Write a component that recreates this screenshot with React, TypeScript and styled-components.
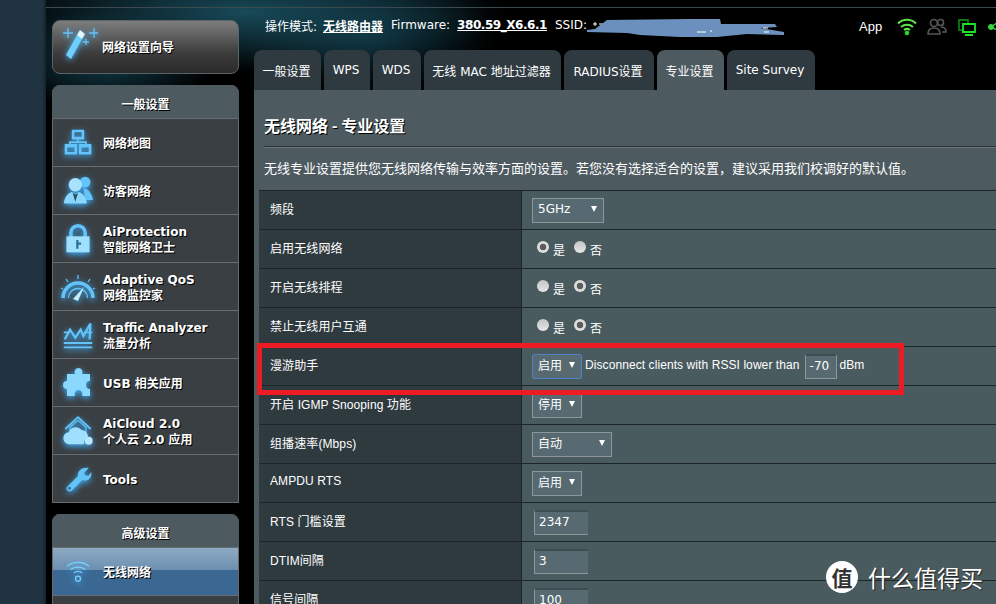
import React from "react";
import styled, { createGlobalStyle } from "styled-components";

const Global = createGlobalStyle`
  html, body { margin: 0; padding: 0; background: #000; }
  body { width: 996px; height: 604px; overflow: hidden; font-family: "DejaVu Sans", "Noto Sans CJK SC", sans-serif; }
  * { box-sizing: border-box; }
`;

const CJK = `"Noto Sans CJK SC"`;

const Page = styled.div`
  position: relative;
  display: flex;
  width: 996px;
  height: 604px;
  overflow: hidden;
`;
const Rail = styled.div`
  width: 46px;
  flex: none;
  background: linear-gradient(90deg, #1f3341 0, #1f3341 42px, #16232c 46px);
`;
const Stage = styled.div`
  flex: 1;
  min-width: 0;
  background-color: #000;
  background-image:
    radial-gradient(ellipse 260px 60px at 200px 12px, #184a59 0, #123a4700 100%),
    radial-gradient(ellipse 110px 50px at 60px 60px, #123d4b 0, #123d4b00 100%),
    radial-gradient(ellipse 130px 60px at 320px 35px, #0d2e3a 0, #0d2e3a00 100%);
  background-repeat: no-repeat;
`;
const TopStrip = styled.div`
  height: 8px;
  border-bottom: 1px solid #3c4a50;
`;
const Columns = styled.div`
  display: flex;
  align-items: flex-start;
`;
const Sidebar = styled.aside`
  width: 208px;
  flex: none;
  padding: 12px 0 0 6px;
  display: flex;
  flex-direction: column;
  gap: 11px;
`;
const Wizard = styled.div`
  width: 187px;
  height: 54px;
  border: 1px solid #5a6468;
  border-radius: 8px;
  background: linear-gradient(180deg, #7d7d7d 0, #3c3c3c 62%, #2a2a2a 100%);
  display: flex;
  align-items: center;
  padding-left: 9px;
`;
const WandBox = styled.div`
  margin-bottom: 9px;
  flex: none;
  svg { display: block; filter: drop-shadow(0 1px 3px #49b8ff); }
`;
const Section = styled.section`
  width: 187px;
  border-radius: 8px 8px 0 0;
  overflow: hidden;
`;
const SectionHead = styled.div`
  height: 33px;
  background: #4d5a5f;
  border: 1px solid #4d5a5f;
  border-bottom: none;
  padding-top: 2px;
  color: #fff;
  font: bold 12px ${CJK}, sans-serif;
  text-shadow: 1px 1px 0 #000;
  display: flex;
  align-items: center;
  justify-content: center;
`;
const NavRow = styled.div<{ $active?: boolean; $h?: number }>`
  height: ${(p) => p.$h ?? 48}px;
  display: flex;
  align-items: center;
  border: 1px solid #666c70;
  border-bottom: none;
  background: ${(p) =>
    p.$active
      ? "linear-gradient(180deg, #8eabc4 0, #6d8fb0 46%, #3a6893 46%, #3a6893 100%)"
      : "#3a3f43"};
  &:last-child { border-bottom: 1px solid #666c70; }
`;
const IconSlot = styled.div`
  width: 50px;
  height: 36px;
  flex: none;
  display: flex;
  justify-content: center;
  align-items: center;
  svg { filter: drop-shadow(0 2px 3px #3fb0ff); display: block; }
`;
const NavLabel = styled.div`
  padding-top: 2px;
  color: #fff;
  font: bold 12px/16px "DejaVu Sans", ${CJK}, sans-serif;
  text-shadow: 1px 1px 0 #000;
  white-space: nowrap;
`;
const WizardLabel = styled(NavLabel)`
  margin-left: 4px;
`;
const Main = styled.main`
  flex: 1;
  min-width: 0;
`;
const StatusBar = styled.div`
  height: 42px;
  display: flex;
  align-items: center;
  padding: 0 0 8px 11px;
  font: 12px "DejaVu Sans", ${CJK}, sans-serif;
  color: #fff;
  white-space: nowrap;
`;
const Strong = styled.span<{ $tight?: boolean }>`
  font-weight: bold;
  text-decoration: underline;
  margin: 0 8px 0 ${(p) => (p.$tight ? 7 : 6)}px;
  letter-spacing: ${(p) => (p.$tight ? -0.45 : 0)}px;
`;
const Ssid = styled.span`
  position: relative;
  display: inline-block;
  width: 200px;
  height: 16px;
`;
const ScribbleSvg = styled.svg`
  position: absolute;
  left: 0;
  top: 0;
  overflow: visible;
`;
const StatusRight = styled.div`
  margin-left: auto;
  display: flex;
  align-items: center;
  width: 137px;
  font: 13px "Liberation Sans", sans-serif;
  overflow: hidden;
  padding-top: 3px;
  svg { display: block; flex: none; }
`;
const AppText = styled.span`
  width: 38px;
  flex: none;
`;
const IconGap = styled.span<{ $w: number }>`
  width: ${(p) => p.$w}px;
  flex: none;
`;
const Tabs = styled.div`
  display: flex;
  gap: 3px;
  height: 40px;
`;
const Tab = styled.div<{ $w: number; $on?: boolean }>`
  width: ${(p) => p.$w}px;
  border-radius: 8px 8px 0 0;
  padding-right: 2px;
  background: ${(p) => (p.$on ? "#4d5a5f" : "#2e3a3f")};
  color: #fff;
  font: 12px "DejaVu Sans", ${CJK}, sans-serif;
  display: flex;
  align-items: center;
  justify-content: center;
  white-space: nowrap;
`;
const Panel = styled.div`
  background: #4d5a5f;
  padding-left: 5px;
  height: 514px;
`;
const Title = styled.h1`
  margin: 0 0 0 5px;
  height: 57px;
  padding-top: 23px;
  border-bottom: 1px solid #2b3437;
  box-shadow: 0 1px 0 #6a7579;
  color: #fff;
  font: bold 16px/24px ${CJK}, sans-serif;
  text-shadow: 1px 1px 0 #000;
`;
const Description = styled.p`
  margin: 0 0 0 5px;
  height: 43px;
  padding-top: 11px;
  color: #fff;
  font: 13px/20px ${CJK}, sans-serif;
  white-space: nowrap;
`;
const Table = styled.div`
  border-top: 1px solid #1e2528;
`;
const Row = styled.div`
  display: grid;
  grid-template-columns: 262px 1fr;
  height: 39px;
  border-bottom: 1px solid #1e2528;
`;
const Label = styled.div`
  background: #2f3a3f;
  color: #fff;
  font: 12px "Liberation Sans", ${CJK}, sans-serif;
  display: flex;
  align-items: center;
  padding: 0 0 4px 11px;
  letter-spacing: 0.1px;
`;
const Value = styled.div`
  background: #4a5b60;
  border-left: 1px solid #1e2528;
  display: flex;
  align-items: center;
  padding-left: 10px;
  color: #fff;
  font: 12px "Liberation Sans", ${CJK}, sans-serif;
  white-space: nowrap;
`;
const Select = styled.div<{ $w: number; $focus?: boolean }>`
  width: ${(p) => p.$w}px;
  height: 25px;
  flex: none;
  background: #576a72;
  border: 1px solid ${(p) => (p.$focus ? "#4f82c4" : "#8c979a")};
  border-radius: ${(p) => (p.$focus ? 2 : 0)}px;
  display: flex;
  align-items: center;
  justify-content: space-between;
  padding: 0 6px 3px 5px;
  color: #fff;
  font: 12px "DejaVu Sans", ${CJK}, sans-serif;
`;
const Arrow = styled.span`
  width: 0;
  height: 0;
  border-left: 3.5px solid transparent;
  border-right: 3.5px solid transparent;
  border-top: 6px solid #fff;
`;
const Radio = styled.span<{ $on?: boolean }>`
  width: 12px;
  height: 12px;
  border-radius: 50%;
  margin: 0 4px 4px 5px;
  flex: none;
  background: ${(p) =>
    p.$on
      ? "radial-gradient(circle, #5c5c5c 0, #5c5c5c 3px, #dcdcdc 3.6px)"
      : "linear-gradient(180deg, #c4c4c4, #e6e6e6)"};
`;
const RadioText = styled.span`
  margin-right: 4px;
`;
const Hint = styled.span`
  margin: 0 0 3px 3px;
  font-size: 12px;
  letter-spacing: 0.08px;
`;
const NumberBox = styled.div<{ $w: number; $open?: boolean }>`
  width: ${(p) => p.$w}px;
  height: 25px;
  flex: none;
  background: #576a72;
  border: 1px solid #8c979a;
  border-top: 2px solid #3f4c50;
  ${(p) => (p.$open ? "border-right: none; margin-left: 2px;" : "")}
  color: #fff;
  font: 12px "DejaVu Sans", sans-serif;
  display: flex;
  align-items: center;
  padding: 0 0 1px 4px;
`;
const NumberGap = styled.div`
  margin: 0 3px 0 5px;
`;
const Unit = styled.span`
  font-size: 12px;
  margin-bottom: 2px;
`;
const RedBox = styled.div`
  position: absolute;
  left: 257px;
  top: 343px;
  width: 647px;
  height: 52px;
  border: 5px solid #ed1c24;
  pointer-events: none;
`;
const Watermark = styled.div`
  position: absolute;
  left: 826px;
  top: 561px;
  display: flex;
  align-items: center;
  gap: 10px;
`;
const Badge = styled.div`
  width: 32px;
  height: 32px;
  border-radius: 50%;
  background: #fff;
  color: #333;
  font: bold 21px/32px ${CJK}, sans-serif;
  text-align: center;
`;
const MarkText = styled.div`
  color: #fff;
  font: 23px/32px ${CJK}, sans-serif;
  text-shadow: 1px 1px 1px #222;
`;

const B = "#62c4f8";
const Ico: React.FC<{ s?: number; children: React.ReactNode }> = ({ s = 36, children }) => (
  <svg width={s} height={s} viewBox="0 0 36 36" fill={B}>
    {children}
  </svg>
);

const WandIcon = () => (
  <svg width="36" height="36" viewBox="0 0 36 36" fill="none">
    <path d="M4 30l5 4 11-20-5-4z" fill="#6fd0fb" />
    <path d="M15 10l5 4 3-5-5-4z" fill="#e4f6ff" />
    <path d="M6 3v10M1 8h10M32 3v10M27 8h9M24 14v6M21 17h6" stroke={B} strokeWidth="1.300" />
  </svg>
);
const NetIcon = () => (
  <Ico s={32}>
    <path fillRule="evenodd" d="M11 3h14v11h-14zM14 6v5h8v-5zM3 19h14v12H3zM6 23v5h8v-5zM19 19h14v12H19zM22 23v5h8v-5z" />
    <path d="M17 14h2v2h9v3h-2v-1H10v1H8v-3h9z" />
  </Ico>
);
const GuestIcon = () => (
  <Ico s={32}>
    <circle cx="26" cy="8" r="6" />
    <path d="M24 15c5 0 9 5 11 13H26z" />
    <circle cx="15" cy="11" r="7.500" fill="#a8e2ff" />
    <path d="M2 32c1-8 5-12 9-13l4 2 4-2c4 1 8 5 9 13z" fill="#8bd6fd" />
    <path d="M12 20l3 10 3-10-3 2z" fill="#2b4d63" />
  </Ico>
);
const LockIcon = () => (
  <Ico s={32}>
    <path d="M8 17v-6a10 10 0 0 1 20 0v6h-4v-6a6 6 0 0 0-12 0v6z" />
    <path d="M5 15h26v18H5z" fill="#9fe0ff" />
    <path d="M16 19h2.500v3h3v2.500h-3V29H16z" fill="#2e6f96" />
  </Ico>
);
const GaugeIcon = () => (
  <Ico>
    <g fill="none" stroke={B}>
      <path d="M3 29a15 15 0 0 1 30 0" strokeWidth="3.500" />
      <path d="M8.500 29a9.500 9.500 0 0 1 19 0" strokeWidth="1.300" />
      <path d="M18 10V6M8 13L6 10M28 13l2-3M3 20l-2-1M33 20l2-1" strokeWidth="1.300" />
    </g>
    <path d="M13 30l11-12-6 14z" fill="#c6eeff" />
  </Ico>
);
const TrafficIcon = () => (
  <Ico s={32}>
    <path d="M2 26h32v2H2zM2 31h32v2H2zM2 14h7v2H2zM27 14h7v2h-7z" />
    <path d="M3 23l6-11 6 9 6-9 3 7 8-14-1 18" fill="none" stroke={B} strokeWidth="2.500" />
  </Ico>
);
const PuzzleIcon = () => (
  <Ico>
    <path d="M7 9h8a4 4 0 1 1 7 0h8v7a4 4 0 1 0 0 8v7h-8a4 4 0 1 0-7 0H7v-7a4 4 0 1 1 0-8z" fill="#8bd8ff" />
  </Ico>
);
const CloudIcon = () => (
  <Ico s={32}>
    <path d="M18 1L3 15l1.500 1.500L18 4l13.500 12.500L33 15z" />
    <path d="M9 14l9-8 9 8v6H9z" fill="none" stroke={B} strokeWidth="1.500" />
    <path d="M9 33a7 7 0 0 1-1-14 8 8 0 0 1 14-2 7 7 0 0 1 7 8 6 6 0 0 0-4 8z" fill="#9fe0ff" />
    <circle cx="30" cy="29" r="4.500" fill="#b8e8ff" />
  </Ico>
);
const WrenchIcon = () => (
  <Ico s={28}>
    <path fillRule="evenodd" d="M32 4l-6 6 1 3 4 1 4-5c1 6-2 11-8 11-1 0-2 0-3-1L10 33c-2 2-7 1-7-3 0-1 1-2 2-3l13-13c-1-6 5-12 14-10zM7 28a2 2 0 1 0 .1 0z" />
  </Ico>
);
const WifiIcon = () => (
  <Ico s={30}>
    <g fill="none" stroke="#7fd0fa" strokeWidth="1.500">
      <path d="M5 11c7-6 19-6 26 0M9 15c5-4 13-4 18 0M13 19c3-2 7-2 10 0" />
      <circle cx="18" cy="26" r="3" />
    </g>
  </Ico>
);

const GreenWifi = () => (
  <svg width="20" height="18" viewBox="0 0 20 18" fill="none" stroke="#62e24a" strokeWidth="2">
    <path d="M1 5.500c5-5 13-5 18 0M4 9c3.500-3 8.500-3 12 0M7 12c2-1.500 4-1.500 6 0" />
    <circle cx="10" cy="15" r="2.300" fill="#1fdc2a" stroke="none" />
  </svg>
);
const People = () => (
  <svg width="20" height="17" viewBox="0 0 20 17" fill="none" stroke="#555" strokeWidth="1.700">
    <circle cx="13.500" cy="4.500" r="3" />
    <circle cx="7" cy="5" r="3.500" />
    <path d="M1 16c0-4 2-6 6-6s6 2 6 6zM14 9c3 0 5 2 5 5h-4" />
  </svg>
);
const Monitors = () => (
  <svg width="18" height="18" viewBox="0 0 18 18" fill="none" strokeWidth="1.800">
    <path d="M4 12H1V2h9v3" stroke="#0a7a0f" />
    <path d="M5 6h12v8H5zM7 17h8" stroke="#1be526" />
  </svg>
);
const Share = () => (
  <svg width="9" height="12" viewBox="0 0 9 12" fill="#39d63f" stroke="#39d63f">
    <circle cx="3" cy="6" r="2.500" />
    <path d="M3 6L9 2M3 6l6 3" fill="none" strokeWidth="1.500" />
  </svg>
);
const Scribble = () => (
  <ScribbleSvg width="200" height="20" viewBox="0 0 200 20">
    <path d="M6 14h26" stroke="#fff" strokeWidth="1" />
    <path d="M6 7h4M8 5v4M12 7h6" stroke="#fff" strokeWidth="1" />
    <path
      d="M0 13L8 12 20 3 103 2 133 2 134 7 188 7 190 10 173 11 197 15 197 18 160 17 130 20 93 20 53 18 40 16 0 15z"
      fill="#6c90bd"
    />
    <path d="M110 15h9M123 14h2M176 11h5M177 15h5" stroke="#fff" strokeWidth="1.200" />
  </ScribbleSvg>
);

const TABS: [string, number, boolean?][] = [
  ["一般设置", 67],
  ["WPS", 46],
  ["WDS", 48],
  ["无线 MAC 地址过滤器", 137],
  ["RADIUS设置", 90],
  ["专业设置", 67, true],
  ["Site Survey", 88],
];

const YesNo: React.FC<{ yes: boolean }> = ({ yes }) => (
  <>
    <Radio $on={yes} />
    <RadioText>是</RadioText>
    <Radio $on={!yes} />
    <RadioText>否</RadioText>
  </>
);

export default function App() {
  return (
    <Page>
      <Global />
      <Rail />
      <Stage>
        <TopStrip />
        <Columns>
          <Sidebar>
            <Wizard>
              <WandBox><WandIcon /></WandBox>
              <WizardLabel>网络设置向导</WizardLabel>
            </Wizard>
            <Section>
              <SectionHead>一般设置</SectionHead>
              <NavRow><IconSlot><NetIcon /></IconSlot><NavLabel>网络地图</NavLabel></NavRow>
              <NavRow><IconSlot><GuestIcon /></IconSlot><NavLabel>访客网络</NavLabel></NavRow>
              <NavRow><IconSlot><LockIcon /></IconSlot><NavLabel>AiProtection<br />智能网络卫士</NavLabel></NavRow>
              <NavRow><IconSlot><GaugeIcon /></IconSlot><NavLabel>Adaptive QoS<br />网络监控家</NavLabel></NavRow>
              <NavRow><IconSlot><TrafficIcon /></IconSlot><NavLabel>Traffic Analyzer<br />流量分析</NavLabel></NavRow>
              <NavRow><IconSlot><PuzzleIcon /></IconSlot><NavLabel>USB 相关应用</NavLabel></NavRow>
              <NavRow><IconSlot><CloudIcon /></IconSlot><NavLabel>AiCloud 2.0<br />个人云 2.0 应用</NavLabel></NavRow>
              <NavRow $h={49}><IconSlot><WrenchIcon /></IconSlot><NavLabel>Tools</NavLabel></NavRow>
            </Section>
            <Section>
              <SectionHead>高级设置</SectionHead>
              <NavRow $active><IconSlot><WifiIcon /></IconSlot><NavLabel>无线网络</NavLabel></NavRow>
              <NavRow />
            </Section>
          </Sidebar>
          <Main>
            <StatusBar>
              操作模式:<Strong>无线路由器</Strong>Firmware:<Strong $tight>380.59_X6.6.1</Strong>SSID:
              <Ssid><Scribble /></Ssid>
              <StatusRight>
                <AppText>App</AppText>
                <GreenWifi />
                <IconGap $w={10} />
                <People />
                <IconGap $w={11} />
                <Monitors />
                <IconGap $w={12} />
                <Share />
              </StatusRight>
            </StatusBar>
            <Tabs>
              {TABS.map(([t, w, on]) => (
                <Tab key={t} $w={w} $on={on}>{t}</Tab>
              ))}
            </Tabs>
            <Panel>
              <Title>无线网络 - 专业设置</Title>
              <Description>无线专业设置提供您无线网络传输与效率方面的设置。若您没有选择适合的设置，建议采用我们校调好的默认值。</Description>
              <Table>
                <Row><Label>频段</Label><Value><Select $w={72}>5GHz<Arrow /></Select></Value></Row>
                <Row><Label>启用无线网络</Label><Value><YesNo yes /></Value></Row>
                <Row><Label>开启无线排程</Label><Value><YesNo yes={false} /></Value></Row>
                <Row><Label>禁止无线用户互通</Label><Value><YesNo yes={false} /></Value></Row>
                <Row>
                  <Label>漫游助手</Label>
                  <Value>
                    <Select $w={50} $focus>启用<Arrow /></Select>
                    <Hint>Disconnect clients with RSSI lower than</Hint>
                    <NumberGap><NumberBox $w={32}>-70</NumberBox></NumberGap>
                    <Unit>dBm</Unit>
                  </Value>
                </Row>
                <Row><Label>开启 IGMP Snooping 功能</Label><Value><Select $w={50}>停用<Arrow /></Select></Value></Row>
                <Row><Label>组播速率(Mbps)</Label><Value><Select $w={80}>自动<Arrow /></Select></Value></Row>
                <Row><Label>AMPDU RTS</Label><Value><Select $w={50}>启用<Arrow /></Select></Value></Row>
                <Row><Label>RTS 门槛设置</Label><Value><NumberBox $w={54} $open>2347</NumberBox></Value></Row>
                <Row><Label>DTIM间隔</Label><Value><NumberBox $w={54} $open>3</NumberBox></Value></Row>
                <Row><Label>信号间隔</Label><Value><NumberBox $w={54} $open>100</NumberBox></Value></Row>
              </Table>
            </Panel>
          </Main>
        </Columns>
      </Stage>
      <RedBox />
      <Watermark>
        <Badge>值</Badge>
        <MarkText>什么值得买</MarkText>
      </Watermark>
    </Page>
  );
}
